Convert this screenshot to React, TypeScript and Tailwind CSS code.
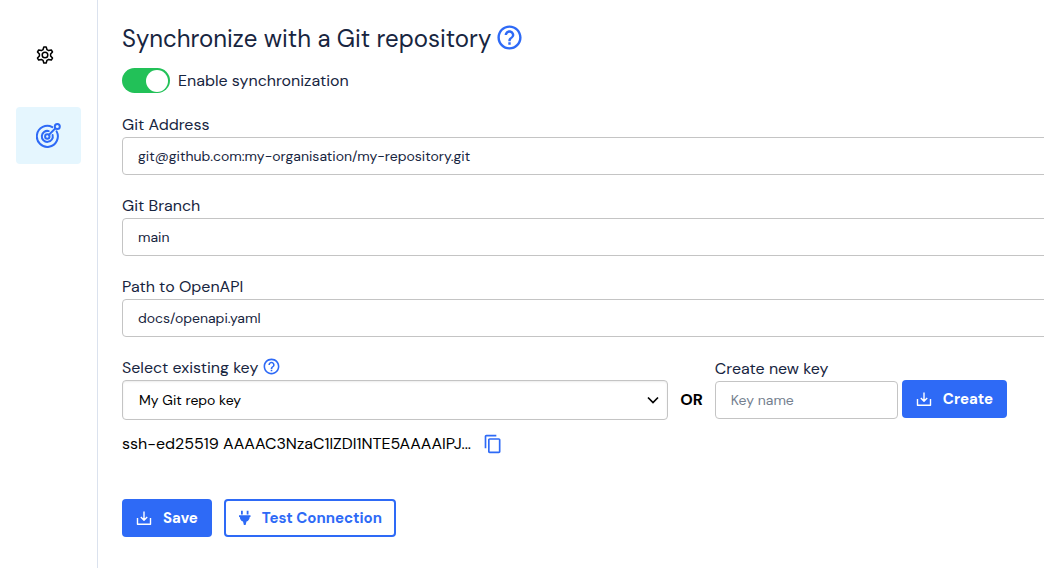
import { useState } from "react";
import { MdContentCopy, MdHelpOutline } from "react-icons/md";

const inputClass =
  "block h-[38px] w-full rounded border border-[#c4c4c4] bg-white px-[15px] text-sm text-[#172540] placeholder:text-[#757f8f]";

const GearIcon = () => (
  <svg width="18" height="20" viewBox="0 0 18 20" fill="none" stroke="currentColor" strokeWidth="1.5" strokeLinejoin="round">
    <path d="M7 4.700L7.800 2h2.400L11 4.700l1.600.9 2.700-.6 1.200 2-1.900 2.100v1.800l1.900 2.100-1.200 2-2.700-.6-1.600.9-.8 2.700H7.800L7 15.300l-1.600-.9-2.700.6-1.200-2 1.900-2.100V9.100L1.500 7l1.200-2 2.700.6z" />
    <circle cx="9" cy="10" r="2.800" />
  </svg>
);

const GoalIcon = () => (
  <svg width="26" height="26" viewBox="0 0 26 26" fill="none" stroke="currentColor" strokeWidth="2" strokeLinecap="round">
    <path d="M16.300 4.100A10.500 10.500 0 1 0 20.600 8.400" />
    <path d="M12.800 8.100A5.500 5.500 0 1 0 16.600 11.900" />
    <circle cx="11.300" cy="13.500" r="2.200" />
    <path d="M13 11.800l6.300-6.400" />
    <circle cx="21.300" cy="3.600" r="2.500" />
  </svg>
);

const DownloadIcon = () => (
  <svg width="16" height="16" viewBox="0 0 16 16" fill="none" stroke="currentColor" strokeWidth="1.400" strokeLinejoin="round">
    <path d="M1.500 8v6.200h13V8M8 1.500v8.500M4.800 7L8 10.200 11.200 7" />
  </svg>
);

const PlugIcon = () => (
  <svg width="16" height="16" viewBox="0 0 16 16" fill="currentColor">
    <path d="M3 .8h1.800v3.700H3zM8.700.8h1.800v3.700H8.700zM1 5.200h11.500v1.700h-.8c0 2.200-1.300 3.800-3.200 4.700L7.600 15H5.900L5 11.600C3.100 10.700 1.800 9.100 1.800 6.900H1z" />
  </svg>
);

type FieldProps = { id: string; label: string; value: string };

const Field = ({ id, label, value }: FieldProps) => (
  <div className="mb-[19px]">
    <label htmlFor={id} className="block leading-6">
      {label}
    </label>
    <input id={id} type="text" defaultValue={value} className={inputClass} />
  </div>
);

const App = () => {
  const [enabled, setEnabled] = useState(true);

  return (
    <div className="flex min-h-screen overflow-x-hidden bg-white font-['DM_Sans',Inter,sans-serif] text-base text-[#172540]">
      {/* Sidebar */}
      <nav className="flex w-[98px] shrink-0 flex-col items-center gap-6 border-r border-[#dbe2ee] pt-[27px]">
        <a href="#settings" aria-label="Settings" className="flex h-14 w-[65px] items-center pl-5 text-black">
          <GearIcon />
        </a>
        <a
          href="#synchronization"
          aria-label="Synchronization"
          className="flex h-[57px] w-[65px] items-center rounded bg-[#e5f6fe] pl-5 text-[#2e6af6]"
        >
          <GoalIcon />
        </a>
      </nav>

      {/* Form */}
      <form className="min-w-0 flex-1 pl-6 pt-[21px]">
        <div className="-mr-4">
          <h1 className="flex items-start gap-1 text-2xl leading-9">
            Synchronize with a Git repository
            <button type="button" aria-label="Help" className="flex h-8 items-center text-[#2e6af6]">
              <MdHelpOutline size={29} />
            </button>
          </h1>

          <label className="mb-5 mt-[11px] flex items-center gap-2 leading-6">
            <input
              type="checkbox"
              role="switch"
              checked={enabled}
              onChange={() => setEnabled(!enabled)}
              className="peer sr-only"
            />
            <span className="flex h-[25px] w-12 items-center rounded-full bg-gray-300 px-0.5 peer-checked:justify-end peer-checked:bg-[#22c158]">
              <span className="size-[22px] rounded-full bg-white" />
            </span>
            Enable synchronization
          </label>

          <Field id="address" label="Git Address" value="git@github.com:my-organisation/my-repository.git" />
          <Field id="branch" label="Git Branch" value="main" />
          <Field id="path" label="Path to OpenAPI" value="docs/openapi.yaml" />
        </div>

        {/* Key selection */}
        <div className="flex items-end pr-[37px]">
          <div className="min-w-0 flex-1">
            <div className="flex items-start gap-1 leading-6">
              <label htmlFor="key">Select existing key</label>
              <button type="button" aria-label="Help about keys" className="flex h-5 items-center text-[#2e6af6]">
                <MdHelpOutline size={19} />
              </button>
            </div>
            <div className="relative">
              <select
                id="key"
                className="block h-10 w-full appearance-none rounded border border-[#c4c4c4] bg-white px-4 text-sm text-black shadow-[inset_0_1px_2px_#00000014]"
              >
                <option>My Git repo key</option>
              </select>
              <svg
                className="pointer-events-none absolute right-2 top-3 text-black"
                width="14"
                height="16"
                viewBox="0 0 14 16"
                fill="none"
                stroke="currentColor"
                strokeWidth="1.700"
              >
                <path d="M2 5.500l5 5 5-5" />
              </svg>
            </div>
          </div>
          <span className="px-3 font-bold leading-10 text-black">OR</span>
          <div className="mb-px w-[183px]">
            <label htmlFor="new-key" className="block leading-6">
              Create new key
            </label>
            <input id="new-key" type="text" placeholder="Key name" className={inputClass} />
          </div>
          <button
            type="button"
            className="mb-0.5 ml-1 flex h-[38px] items-center gap-[11px] rounded bg-[#2e6af6] px-3.5 text-[15px] font-bold text-white"
          >
            <DownloadIcon />
            Create
          </button>
        </div>

        <div className="mt-3 flex items-center gap-3 leading-6 text-black">
          <span className="min-w-0 truncate">ssh-ed25519 AAAAC3NzaC1lZDI1NTE5AAAAIPJ...</span>
          <button type="button" aria-label="Copy key" className="text-[#2e6af6]">
            <MdContentCopy size={20} />
          </button>
        </div>

        <div className="mt-[43px] flex gap-3 text-[15px] font-bold">
          <button type="submit" className="flex h-[38px] items-center gap-[11px] rounded bg-[#2e6af6] px-3.5 text-white">
            <DownloadIcon />
            Save
          </button>
          <button type="button" className="flex h-[38px] items-center gap-2 rounded border-2 border-[#2e6af6] px-3 text-[#2e6af6]">
            <PlugIcon />
            Test Connection
          </button>
        </div>
      </form>
    </div>
  );
};

export default App;
